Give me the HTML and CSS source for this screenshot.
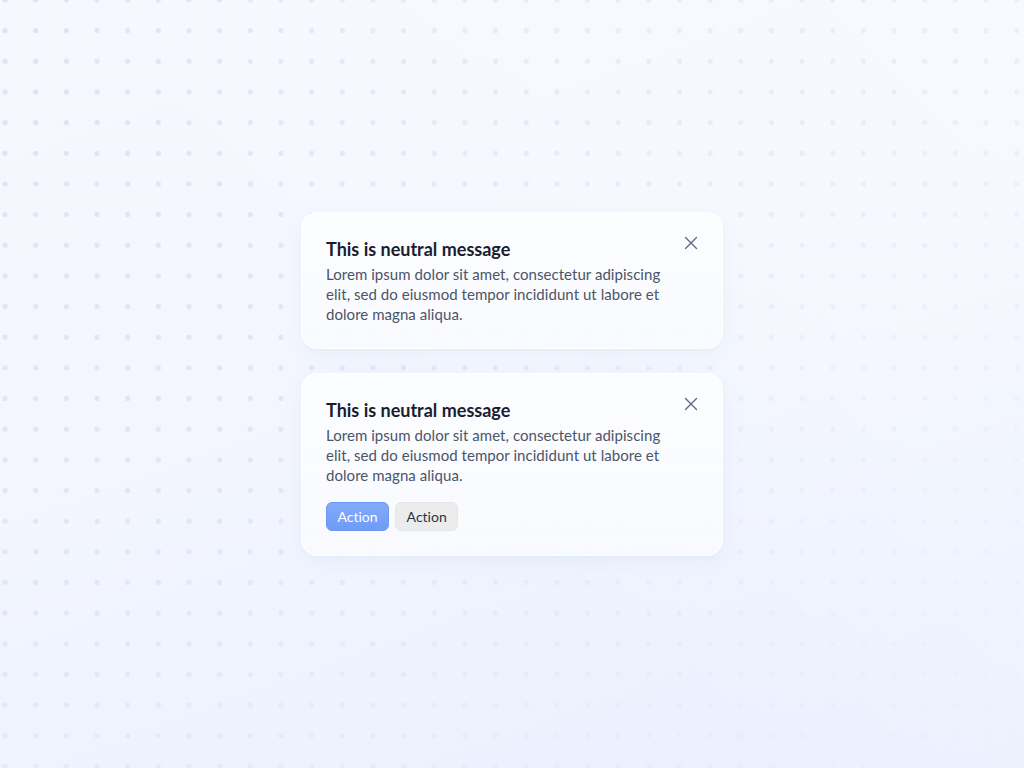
FILE: index.html
```html
<!DOCTYPE html>
<html lang="en">
<head>
<meta charset="utf-8">
<title>Notifications</title>
<link rel="stylesheet" href="styles.css">
</head>
<body>
<div class="bg-dots"></div>
<div class="bg-glow"></div>
<main class="stack">
  <section class="toast">
    <div class="toast-content">
      <h2 class="toast-title">This is neutral message</h2>
      <p class="toast-text">Lorem ipsum dolor sit amet, consectetur adipiscing elit, sed do eiusmod tempor incididunt ut labore et dolore magna aliqua.</p>
    </div>
    <button class="close" aria-label="Close">
      <svg width="14" height="14" viewBox="0 0 14 14"><path d="M1.5 1.5L12.5 12.5M12.5 1.5L1.5 12.5" stroke="#5f6b7d" stroke-width="1.4" stroke-linecap="round"/></svg>
    </button>
  </section>
  <section class="toast">
    <div class="toast-content">
      <h2 class="toast-title">This is neutral message</h2>
      <p class="toast-text">Lorem ipsum dolor sit amet, consectetur adipiscing elit, sed do eiusmod tempor incididunt ut labore et dolore magna aliqua.</p>
      <div class="actions">
        <button class="btn btn-primary">Action</button>
        <button class="btn btn-secondary">Action</button>
      </div>
    </div>
    <button class="close" aria-label="Close">
      <svg width="14" height="14" viewBox="0 0 14 14"><path d="M1.5 1.5L12.5 12.5M12.5 1.5L1.5 12.5" stroke="#5f6b7d" stroke-width="1.4" stroke-linecap="round"/></svg>
    </button>
  </section>
</main>
</body>
</html>
```
FILE: styles.css
```css
* { box-sizing: border-box; }
html, body { margin: 0; padding: 0; }
body {
  width: 1024px;
  height: 768px;
  overflow: hidden;
  position: relative;
  font-family: "Lato", "Noto Sans", sans-serif;
  font-variant-ligatures: none;
  font-feature-settings: "liga" 0, "dlig" 0, "clig" 0;
  background: linear-gradient(160deg, #f5f8fe 0%, #f3f6fe 45%, #edf2fe 75%, #e9effe 100%);
  display: flex;
  align-items: center;
  justify-content: center;
}
.bg-dots {
  position: absolute;
  inset: 0;
  background-image: radial-gradient(circle, #dce3f8 2.3px, rgba(220,227,248,0) 2.9px);
  background-size: 30.67px 30.67px;
  background-position: -10.3px -15.3px;
  -webkit-mask-image: linear-gradient(150deg, #000 0%, rgba(0,0,0,0.85) 45%, rgba(0,0,0,0.25) 85%, rgba(0,0,0,0.1) 100%);
  mask-image: linear-gradient(150deg, #000 0%, rgba(0,0,0,0.85) 45%, rgba(0,0,0,0.25) 85%, rgba(0,0,0,0.1) 100%);
}
.bg-glow {
  position: absolute;
  inset: 0;
  background: linear-gradient(225deg, rgba(255,255,255,0.35) 0%, rgba(255,255,255,0.25) 30%, rgba(255,255,255,0) 60%);
}
.stack {
  position: relative;
  width: 422px;
  display: flex;
  flex-direction: column;
  gap: 24px;
}
.toast {
  display: flex;
  gap: 16px;
  padding: 24px;
  border-radius: 16px;
  background: linear-gradient(180deg, rgba(252,253,255,0.96) 0%, rgba(248,250,254,0.94) 100%);
  border: 1px solid rgba(255,255,255,0.9);
  box-shadow: 0 6px 20px rgba(120,140,200,0.07), 0 1px 2px rgba(120,140,200,0.05);
}
.toast-content {
  flex: 1;
  min-width: 0;
}
.toast-title {
  margin: 0;
  font-size: 18px;
  line-height: 24px;
  font-weight: 700;
  color: #1a1d30;
}
.toast-text {
  margin: 3px 0 0;
  font-size: 15px;
  line-height: 20px;
  letter-spacing: 0.05px;
  color: #4b5568;
}
.close {
  flex: none;
  width: 14px;
  height: 14px;
  padding: 0;
  margin-top: -1px;
  border: 0;
  background: none;
  display: flex;
}
.actions {
  display: flex;
  gap: 6px;
  margin-top: 17px;
}
.btn {
  height: 29px;
  padding: 0 10.5px;
  border-radius: 6px;
  font-family: inherit;
  font-size: 14px;
  line-height: 27px;
  font-variant-ligatures: none;
  font-feature-settings: "liga" 0, "dlig" 0, "clig" 0;
}
.btn-primary {
  color: #ffffff;
  background: linear-gradient(180deg, #83abfb 0%, #6f9bf7 100%);
  border: 1px solid #6b98f5;
}
.btn-secondary {
  color: #2b3445;
  background: #ececed;
  border: 1px solid #e6e6e8;
}
```
